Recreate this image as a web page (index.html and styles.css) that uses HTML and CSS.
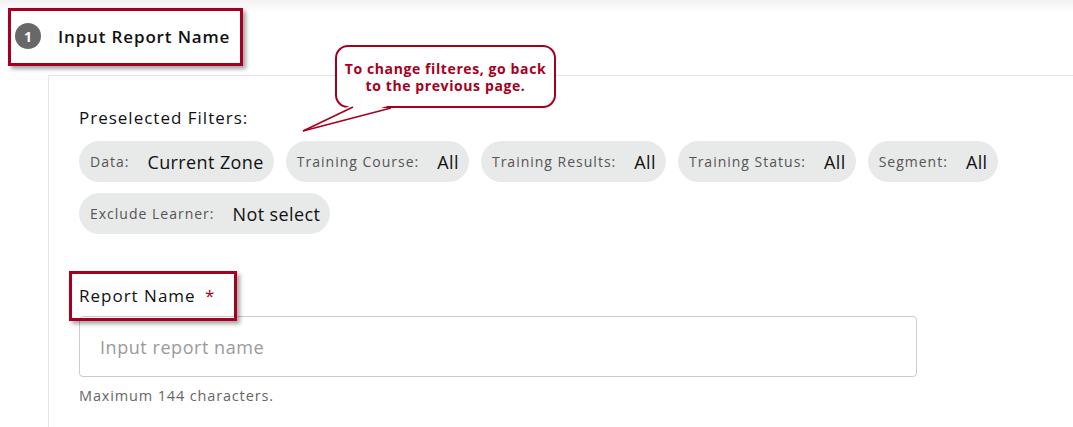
FILE: index.html
```html
<!DOCTYPE html>
<html>
<head>
<meta charset="utf-8">
<link rel="stylesheet" href="styles.css">
</head>
<body>
<div class="page">
  <div class="topbar"></div>
  <div class="header">
    <span class="step">1</span>
    <span class="title">Input Report Name</span>
  </div>
  <div class="card">
    <div class="section-label">Preselected Filters:</div>
    <div class="chips">
      <span class="chip"><span class="k">Data:</span><span class="v">Current Zone</span></span>
      <span class="chip"><span class="k">Training Course:</span><span class="v">All</span></span>
      <span class="chip"><span class="k">Training Results:</span><span class="v">All</span></span>
      <span class="chip"><span class="k">Training Status:</span><span class="v">All</span></span>
      <span class="chip"><span class="k">Segment:</span><span class="v">All</span></span>
      <span class="chip"><span class="k">Exclude Learner:</span><span class="v">Not select</span></span>
    </div>
    <div class="field-label">Report Name <span class="req">*</span></div>
    <div class="input"><span class="placeholder">Input report name</span></div>
    <div class="help">Maximum 144 characters.</div>
  </div>

  <div class="mark mark-header"></div>
  <div class="mark mark-field"></div>
  <div class="bubble">To change filteres, go back<br>to the previous page.</div>
  <svg class="tail" width="100" height="40" viewBox="300 100 100 40">
    <polygon points="351,105 391,105 303,131" fill="#fff"/>
    <line x1="303" y1="131" x2="353" y2="107" stroke="#a50021" stroke-width="1.6"/>
    <line x1="303" y1="131" x2="391" y2="108" stroke="#a50021" stroke-width="1.6"/>
  </svg>
</div>
</body>
</html>
```

FILE: styles.css
```css
html, body {
  margin: 0;
  padding: 0;
  background: #fff;
}
body {
  font-family: "Open Sans", "Noto Sans", sans-serif;
  color: #1a1a1a;
  width: 1073px;
  height: 427px;
  overflow: hidden;
}
.page {
  position: relative;
  height: 427px;
}
.topbar {
  height: 12px;
  background: linear-gradient(#f2f2f2, #ffffff);
}
.header {
  display: flex;
  align-items: center;
  height: 26px;
  margin-top: 11px;
  padding-left: 15px;
}
.step {
  width: 26px;
  height: 26px;
  border-radius: 50%;
  background: #686868;
  color: #fff;
  font-weight: 700;
  font-size: 14px;
  display: flex;
  align-items: center;
  justify-content: center;
}
.title {
  margin-left: 17px;
  font-size: 17px;
  font-weight: 600;
  letter-spacing: 0.85px;
  color: #111;
}
.card {
  margin-top: 26px;
  margin-left: 48px;
  border-left: 1px solid #e6e6e6;
  border-top: 1px solid #e3e3e3;
  padding: 32px 0 40px 30px;
}
.section-label {
  font-size: 17px;
  line-height: 20px;
  font-weight: 500;
  letter-spacing: 1px;
  color: #111;
}
.chips {
  display: flex;
  flex-wrap: wrap;
  gap: 11px 12px;
  margin-top: 13px;
  width: 930px;
}
.chip {
  display: flex;
  align-items: center;
  gap: 18px;
  height: 41px;
  padding: 0 10px 0 11px;
  border-radius: 21px;
  background: #e8e9e9;
}
.k {
  font-size: 14px;
  letter-spacing: 1px;
  color: #555;
}
.v {
  font-size: 18px;
  letter-spacing: 0.4px;
  color: #111;
}
.field-label {
  margin-top: 52px;
  font-size: 17px;
  line-height: 20px;
  font-weight: 500;
  letter-spacing: 1px;
  color: #111;
}
.req {
  color: #a50021;
  margin-left: 4px;
}
.input {
  margin-top: 10px;
  width: 816px;
  height: 59px;
  border: 1px solid #cccccc;
  border-radius: 4px;
  display: flex;
  align-items: center;
  padding-left: 20px;
}
.placeholder {
  font-size: 18px;
  letter-spacing: 0.55px;
  color: #9a9a9a;
}
.help {
  margin-top: 10px;
  font-size: 14.5px;
  line-height: 18px;
  letter-spacing: 0.85px;
  color: #666;
}
.mark {
  position: absolute;
  border: 3px solid #a50021;
  box-shadow: 3px 3px 4px rgba(0,0,0,0.35);
}
.mark-header {
  left: 8px;
  top: 8px;
  width: 229px;
  height: 52px;
}
.mark-field {
  left: 69px;
  top: 271px;
  width: 162px;
  height: 44px;
}
.bubble {
  position: absolute;
  left: 335px;
  top: 45px;
  width: 217px;
  height: 59px;
  border: 2px solid #a50021;
  border-radius: 13px;
  background: #fff;
  color: #a50021;
  font-size: 14px;
  font-weight: 700;
  line-height: 17px;
  letter-spacing: 0.6px;
  text-align: center;
  display: flex;
  align-items: center;
  justify-content: center;
}
.tail {
  position: absolute;
  left: 300px;
  top: 100px;
}
```
